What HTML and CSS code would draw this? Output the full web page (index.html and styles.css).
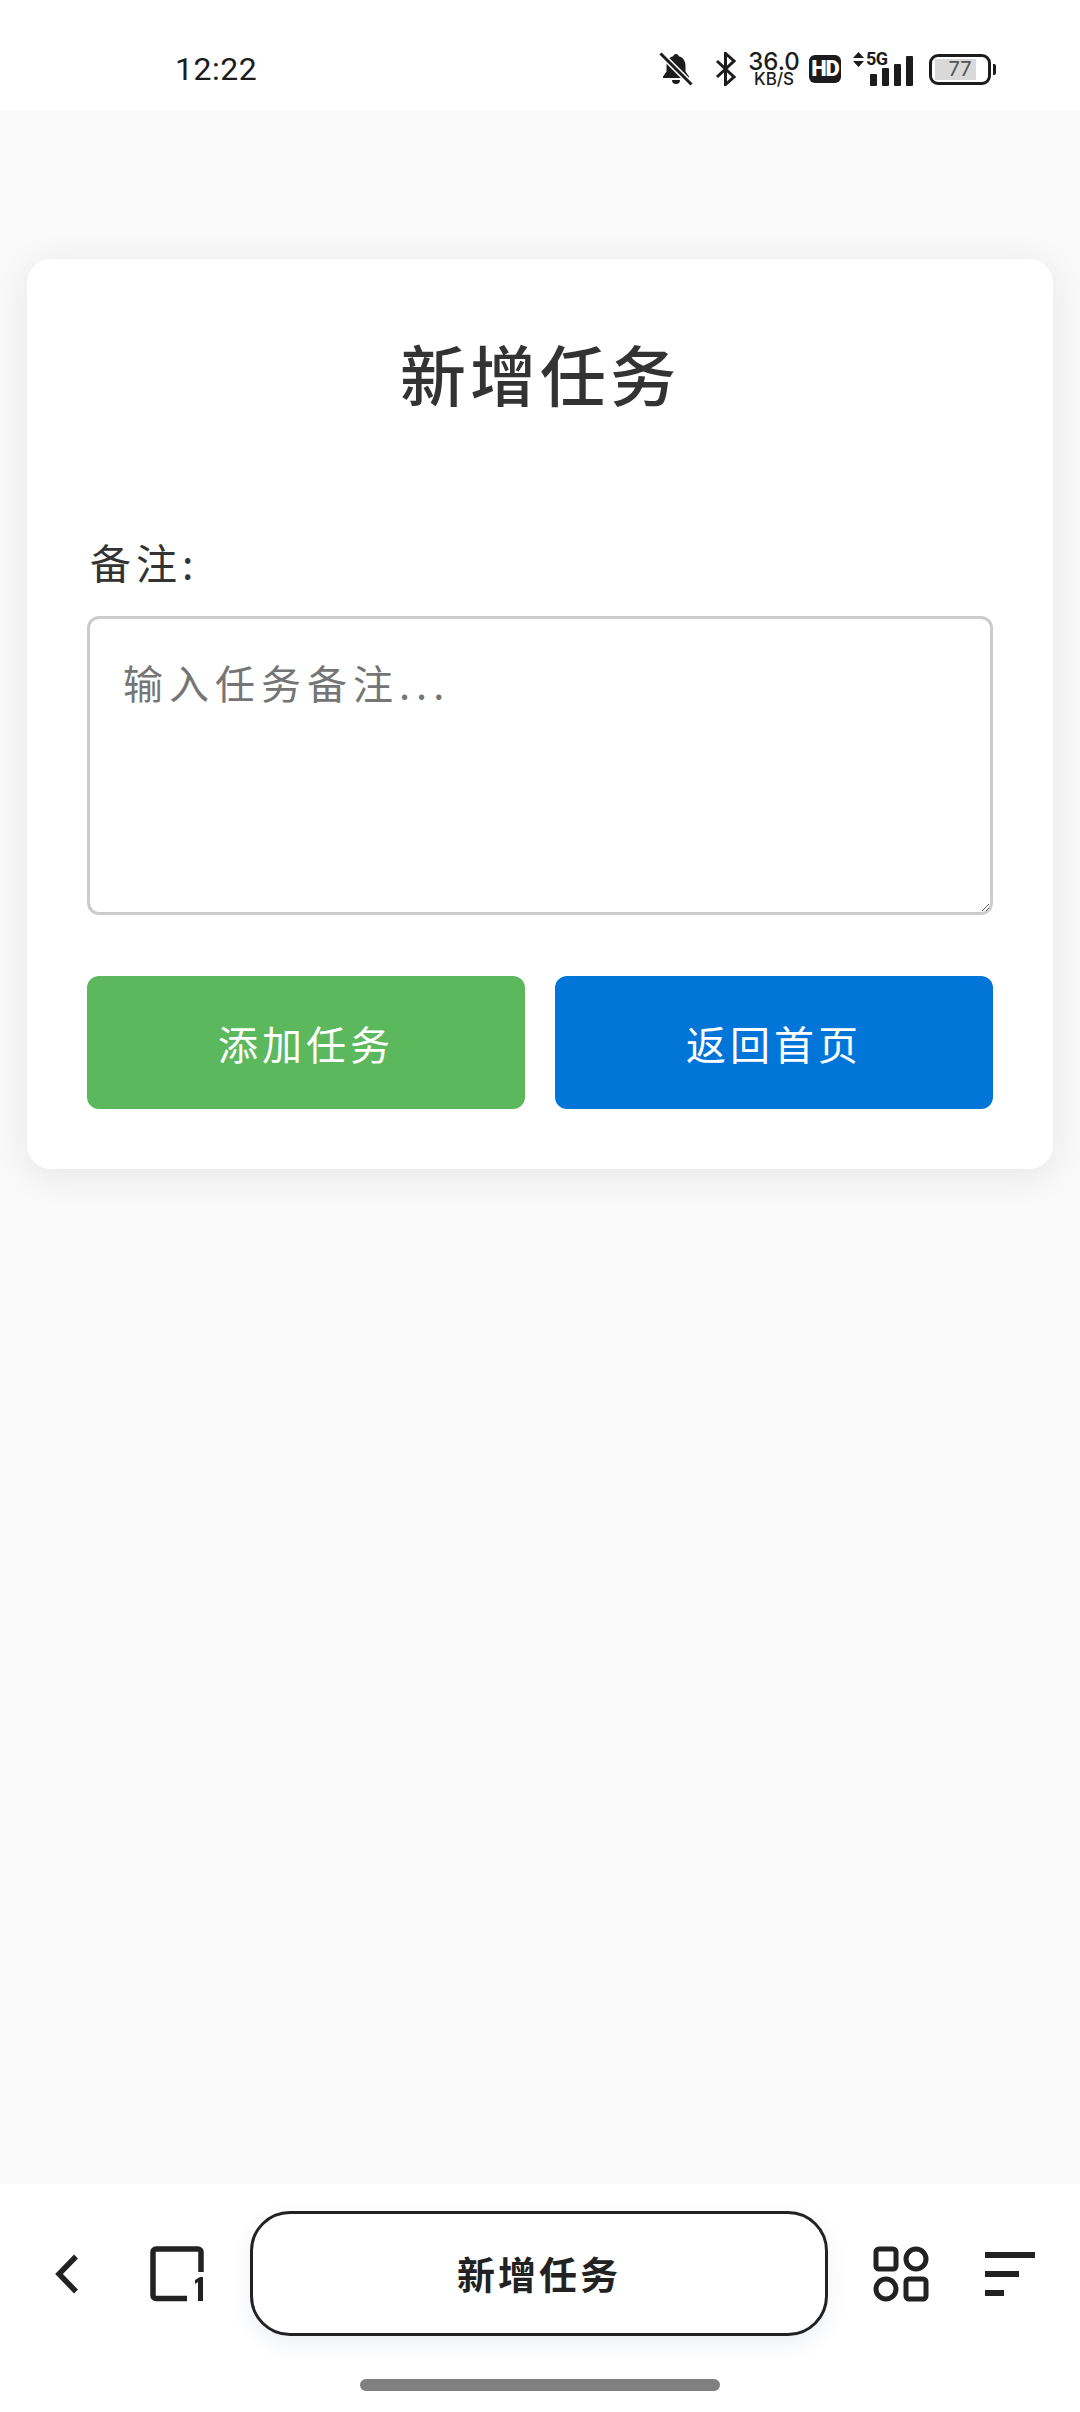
FILE: index.html
```html
<!DOCTYPE html>
<html lang="zh-CN">

<head>
    <meta charset="UTF-8">
    <meta name="viewport" content="width=device-width, initial-scale=1.0">
    <title>新增任务</title>
    <link rel="stylesheet" href="styles.css">
</head>

<body>
    <div class="app-container">
        <div class="status-bar">
            <div class="status-time">12:22</div>
            <div class="status-icons">
                <svg class="icon-bell" width="34" height="34" viewBox="0 0 34 34">
                    <path d="M17 2c1.600 0 2.600 1 2.800 2.300 4.600 1.200 6.700 5 6.700 9.700v5.500l3.500 5v1.500H4v-1.500l3.500-5V14c0-4.700 2.100-8.500 6.700-9.700C14.400 3 15.400 2 17 2z" fill="#1c1c1c"/>
                    <path d="M13 28h8a4 4 0 0 1-8 0z" fill="#1c1c1c"/>
                    <path d="M2 2l30 30" stroke="#ffffff" stroke-width="6"/>
                    <path d="M1.500 1.500l31 31" stroke="#1c1c1c" stroke-width="3"/>
                </svg>
                <svg class="icon-bluetooth" width="22" height="34" viewBox="0 0 22 34">
                    <path d="M2 9l17 16-8.500 7.500V1.500L19 9 2 25" fill="none" stroke="#1c1c1c" stroke-width="3"/>
                </svg>
                <div class="net-speed">
                    <span class="net-value">36.0</span>
                    <span class="net-unit">KB/S</span>
                </div>
                <div class="hd-badge">HD</div>
                <div class="signal">
                    <svg class="signal-arrows" width="11" height="15" viewBox="0 0 11 15">
                        <path d="M5.500 0L11 6H0zM0 9h11l-5.500 6z" fill="#1c1c1c"/>
                    </svg>
                    <span class="signal-label">5G</span>
                    <div class="signal-bars">
                        <span class="bar bar-1"></span>
                        <span class="bar bar-2"></span>
                        <span class="bar bar-3"></span>
                        <span class="bar bar-4"></span>
                    </div>
                </div>
                <div class="battery">
                    <div class="battery-body">
                        <div class="battery-level"></div>
                        <span class="battery-text">77</span>
                    </div>
                    <div class="battery-cap"></div>
                </div>
            </div>
        </div>

        <div class="page-body">
            <div class="card">
                <h1 class="card-title">新增任务</h1>
                <label class="field-label" for="note">备注:</label>
                <textarea class="field-input" id="note" placeholder="输入任务备注..."></textarea>
                <div class="button-row">
                    <button class="btn btn-add">添加任务</button>
                    <button class="btn btn-home">返回首页</button>
                </div>
            </div>
        </div>

        <div class="bottom-nav">
            <div class="nav-row">
                <svg class="nav-back" width="24" height="40" viewBox="0 0 24 40">
                    <path d="M21 2.500L4 20l17 17.500" fill="none" stroke="#222222" stroke-width="5.500"/>
                </svg>
                <svg class="nav-tabs" width="54" height="56" viewBox="0 0 54 56">
                    <path d="M37 52.500H6a3 3 0 0 1-3-3V6a3 3 0 0 1 3-3h42a3 3 0 0 1 3 3v20" fill="none" stroke="#222222" stroke-width="5.500"/>
                    <path d="M45 34l5-3h3v24h-5V36l-3 2z" fill="#222222"/>
                </svg>
                <div class="nav-pill">新增任务</div>
                <svg class="nav-grid" width="56" height="56" viewBox="0 0 56 56">
                    <rect x="3" y="3" width="20" height="20" rx="3" fill="none" stroke="#222222" stroke-width="5"/>
                    <circle cx="43" cy="13" r="10" fill="none" stroke="#222222" stroke-width="5"/>
                    <circle cx="13" cy="43" r="10" fill="none" stroke="#222222" stroke-width="5"/>
                    <rect x="33" y="33" width="20" height="20" rx="3" fill="none" stroke="#222222" stroke-width="5"/>
                </svg>
                <svg class="nav-menu" width="50" height="44" viewBox="0 0 50 44">
                    <path d="M0 3h50M0 22h34M0 41h19" fill="none" stroke="#222222" stroke-width="6"/>
                </svg>
            </div>
            <div class="home-bar"></div>
        </div>
    </div>
</body>

</html>
```

FILE: styles.css
```css
:root {
    --text: #333333;
    --ink: #222222;
    --page-bg: #f9f9f9;
    --white: #ffffff;
    --green: #5cb85c;
    --blue: #0275d8;
    --border: #cccccc;
}

* {
    margin: 0;
    padding: 0;
    box-sizing: border-box;
}

body {
    font-family: "Noto Sans CJK SC", "Noto Sans", sans-serif;
    color: var(--text);
    background-color: var(--white);
}

.app-container {
    width: 1080px;
    height: 2412px;
    display: flex;
    flex-direction: column;
    overflow: hidden;
}

/* Status bar */
.status-bar {
    height: 111px;
    flex-shrink: 0;
    display: flex;
    align-items: center;
    justify-content: space-between;
    padding: 24px 84px 0 175px;
    background-color: var(--white);
    color: #1c1c1c;
}

.status-time {
    font-family: "Roboto", sans-serif;
    font-size: 32px;
    font-weight: 400;
    letter-spacing: 0.5px;
    padding-top: 3px;
}

.status-icons {
    display: flex;
    align-items: center;
    padding-top: 3px;
}

.icon-bell {
    margin-right: 22px;
}

.icon-bluetooth {
    margin-right: 12px;
}

.net-speed {
    width: 50px;
    display: flex;
    flex-direction: column;
    align-items: center;
    font-family: "Inter", sans-serif;
    margin-right: 10px;
}

.net-value {
    font-size: 24px;
    line-height: 21px;
    font-weight: 500;
}

.net-unit {
    font-size: 17px;
    line-height: 15px;
    font-weight: 500;
}

.hd-badge {
    width: 32px;
    height: 28px;
    border-radius: 6px;
    background-color: #1c1c1c;
    color: var(--white);
    font-family: "Roboto", sans-serif;
    font-size: 22px;
    font-weight: 900;
    line-height: 28px;
    letter-spacing: -1px;
    text-align: center;
    margin-right: 12px;
}

.signal {
    position: relative;
    width: 60px;
    height: 34px;
    margin-right: 16px;
}

.signal-arrows {
    position: absolute;
    left: 0;
    top: 0;
}

.signal-label {
    position: absolute;
    left: 13px;
    top: -2px;
    font-family: "Roboto", sans-serif;
    font-size: 18px;
    font-weight: 700;
    line-height: 18px;
    letter-spacing: -0.5px;
}

.signal-bars {
    position: absolute;
    right: 0;
    bottom: 0;
    display: flex;
    align-items: flex-end;
    gap: 5px;
}

.bar {
    width: 7px;
    border-radius: 1px;
    background-color: #1c1c1c;
}

.bar-1 {
    height: 12px;
}

.bar-2 {
    height: 18px;
}

.bar-3 {
    height: 22px;
}

.bar-4 {
    height: 30px;
}

.battery {
    display: flex;
    align-items: center;
    gap: 2px;
}

.battery-body {
    position: relative;
    width: 62px;
    height: 31px;
    border: 3px solid #1c1c1c;
    border-radius: 9px;
    overflow: hidden;
}

.battery-level {
    width: 41px;
    height: 100%;
    margin-left: 3px;
    padding: 2px 0;
    background-color: #d9d9d9;
    background-clip: content-box;
}

.battery-text {
    position: absolute;
    left: 14px;
    top: 0;
    width: 28px;
    font-family: "Inter", sans-serif;
    font-size: 20px;
    line-height: 25px;
    text-align: center;
    color: #555555;
}

.battery-cap {
    width: 3px;
    height: 11px;
    border-radius: 0 2px 2px 0;
    background-color: #1c1c1c;
}

/* Form card */
.page-body {
    flex: 1;
    padding: 148px 27px 0;
    background-color: var(--page-bg);
}

.card {
    display: flex;
    flex-direction: column;
    padding: 68px 60px 60px;
    background-color: var(--white);
    border-radius: 24px;
    box-shadow: 0 6px 36px rgba(0, 0, 0, 0.08);
}

.card-title {
    font-size: 66px;
    font-weight: 500;
    line-height: 90px;
    letter-spacing: 4px;
    text-align: center;
    margin-bottom: 117px;
}

.field-label {
    font-size: 41px;
    line-height: 54px;
    letter-spacing: 5px;
    margin-left: 3px;
    margin-bottom: 28px;
}

.field-input {
    display: block;
    width: 100%;
    height: 299px;
    padding: 36px 33px 30px;
    border: 3px solid var(--border);
    border-radius: 12px;
    font-family: inherit;
    font-size: 40px;
    line-height: 54px;
    letter-spacing: 6px;
    color: var(--text);
    background-color: var(--white);
    outline: none;
}

.field-input::placeholder {
    color: #757575;
    opacity: 1;
}

.button-row {
    display: flex;
    gap: 30px;
    margin-top: 61px;
}

.btn {
    flex: 1;
    height: 133px;
    border: none;
    border-radius: 12px;
    font-family: inherit;
    font-size: 40px;
    letter-spacing: 4px;
    color: var(--white);
}

.btn-add {
    background-color: var(--green);
}

.btn-home {
    background-color: var(--blue);
}

/* Bottom navigation */
.bottom-nav {
    height: 228px;
    flex-shrink: 0;
    padding-top: 27px;
    background-color: var(--white);
}

.nav-row {
    display: flex;
    align-items: center;
    padding-left: 55px;
}

.nav-back {
    margin-right: 71px;
}

.nav-tabs {
    margin-right: 46px;
}

.nav-pill {
    width: 578px;
    height: 125px;
    border: 3px solid var(--ink);
    border-radius: 40px;
    background-color: var(--white);
    box-shadow: 0 8px 20px rgba(90, 110, 160, 0.1);
    font-size: 38px;
    font-weight: 700;
    line-height: 117px;
    letter-spacing: 3px;
    text-align: center;
    color: var(--ink);
    margin-right: 45px;
}

.nav-grid {
    margin-right: 56px;
}

.home-bar {
    width: 360px;
    height: 12px;
    margin: 43px auto 0;
    border-radius: 6px;
    background-color: #808080;
}
```
